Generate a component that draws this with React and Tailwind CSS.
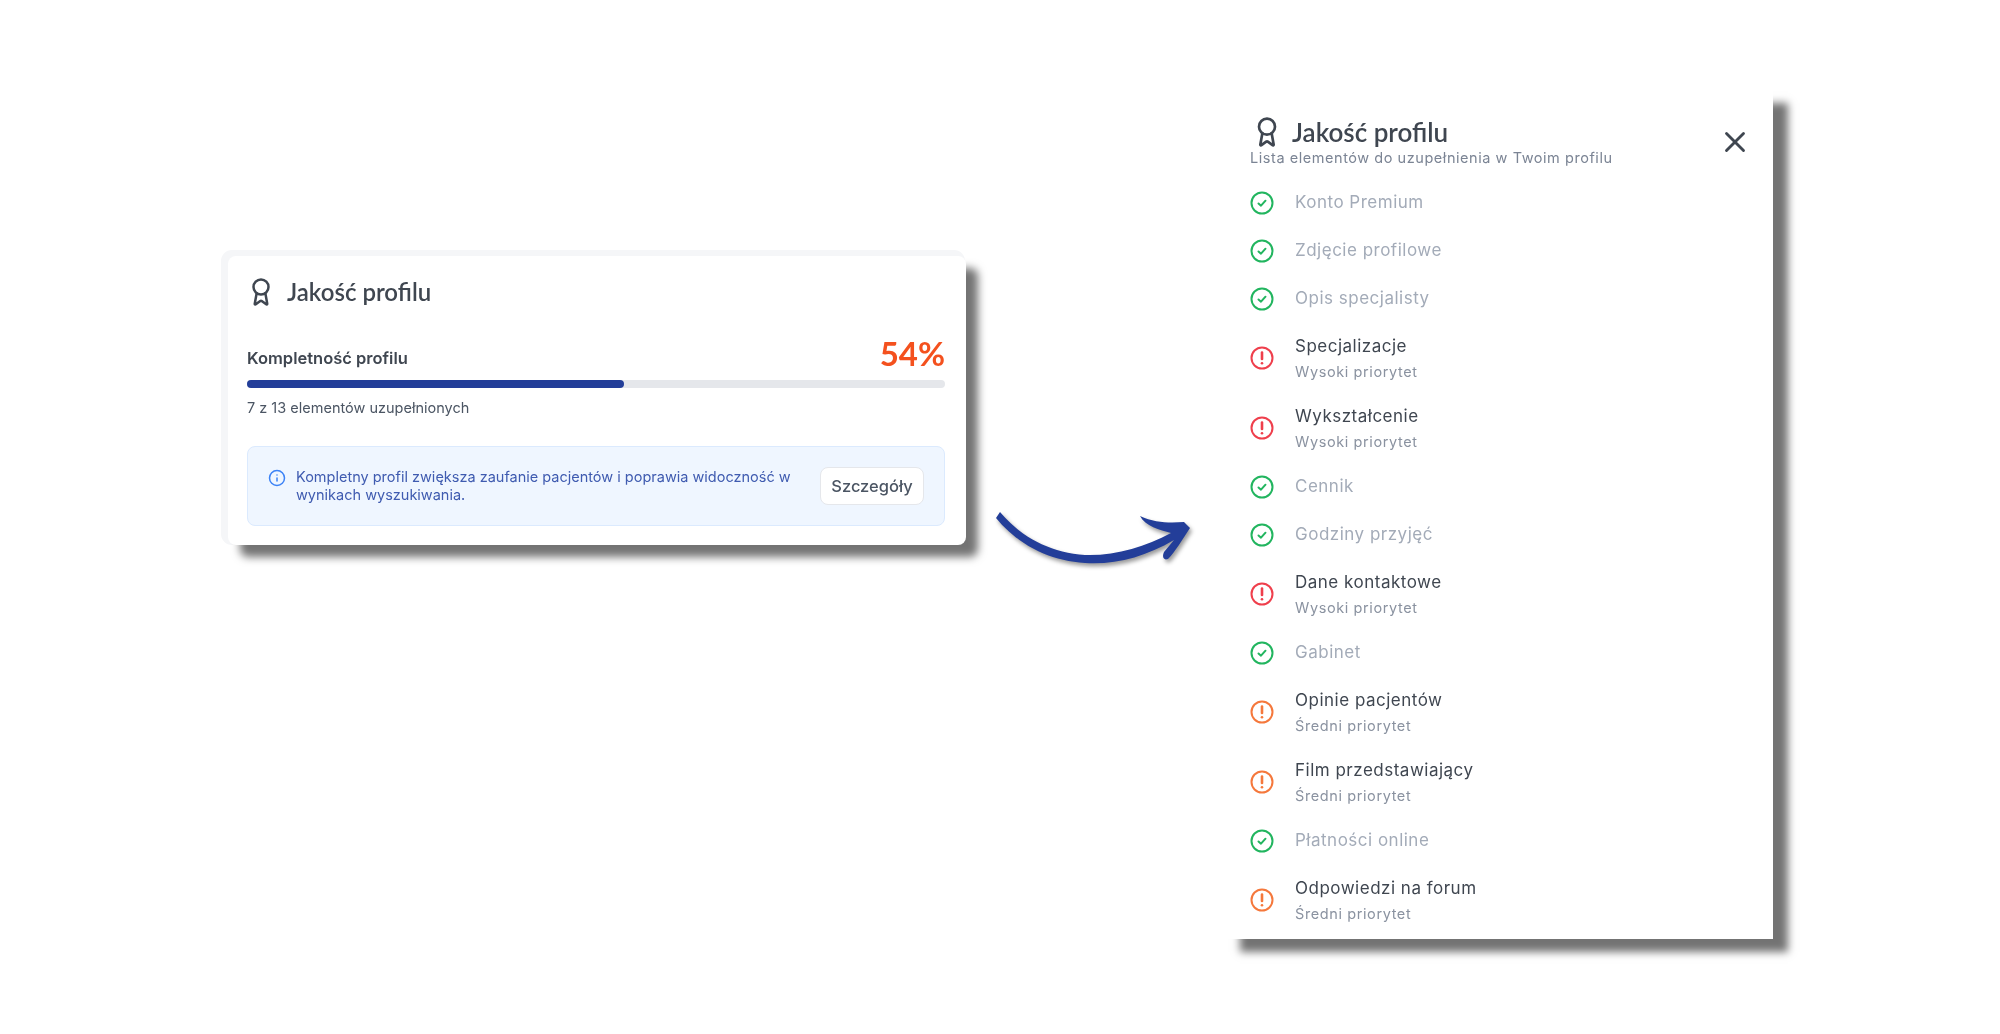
import React from "react";
import { Award, Info, X } from "lucide-react";

const items = [
  { name: "Konto Premium", done: true },
  { name: "Zdjęcie profilowe", done: true },
  { name: "Opis specjalisty", done: true },
  { name: "Specjalizacje", level: "high" },
  { name: "Wykształcenie", level: "high" },
  { name: "Cennik", done: true },
  { name: "Godziny przyjęć", done: true },
  { name: "Dane kontaktowe", level: "high" },
  { name: "Gabinet", done: true },
  { name: "Opinie pacjentów", level: "medium" },
  { name: "Film przedstawiający", level: "medium" },
  { name: "Płatności online", done: true },
  { name: "Odpowiedzi na forum", level: "medium" },
];

function CheckIcon() {
  return (
    <svg viewBox="0 0 24 24" className="w-6 h-6 shrink-0 text-[#22b55f]" fill="none" stroke="currentColor">
      <circle cx="12" cy="12" r="10.5" strokeWidth="2" />
      <path d="M8.5 12.5l2.5 2.2 4.5-5" strokeWidth="2" strokeLinecap="round" strokeLinejoin="round" />
    </svg>
  );
}

function AlertIcon({ level }) {
  const color = level === "high" ? "text-[#ef3f4c]" : "text-[#f5783c]";
  return (
    <svg viewBox="0 0 24 24" className={`w-6 h-6 shrink-0 ${color}`} fill="none" stroke="currentColor">
      <circle cx="12" cy="12" r="10.5" strokeWidth="2" />
      <path d="M12 6.5v6.5" strokeWidth="2.6" strokeLinecap="round" />
      <path d="M12 17.2v.1" strokeWidth="2.6" strokeLinecap="round" />
    </svg>
  );
}

function Arrow() {
  return (
    <svg viewBox="0 0 240 100" className="w-[240px] h-[100px] shrink-0 ml-1 mt-[490px] drop-shadow-[2px_3px_2px_rgba(0,0,0,0.4)]">
      <path
        fill="#233e99"
        d="M30 22 C50 46 80 63 115 65 C145 66 175 57 201 43 C190 40 175 36 170 26 C185 33 200 33 214 32 L220 38 C212 50 205 62 198 69 C193 71 192 66 194 62 L204 50 C175 67 145 75 115 73 C80 71 48 55 26 28 Z"
      />
    </svg>
  );
}

function ProfileCard() {
  return (
    <div className="w-[738px] h-[289px] shrink-0 mt-[256px] bg-white rounded-lg pl-[19px] pr-[21px] pt-[20px] blur-[0.5px] shadow-[12px_12px_8px_rgba(0,0,0,0.55),-4px_-3px_0_3px_#f5f6f8]">
      <div className="flex items-center gap-[11px] h-[32px]">
        <Award className="w-[30px] h-[30px] -ml-[1px] text-[#3f4650]" strokeWidth={2} />
        <h2 className="font-['Lato',sans-serif] font-semibold text-[24px] text-[#3f4650]">Jakość profilu</h2>
      </div>
      <div className="flex items-center justify-between mt-[29px] h-[34px]">
        <span className="mt-[8px] font-semibold text-[16.5px] text-[#3f4650]">Kompletność profilu</span>
        <span className="font-['Lato',sans-serif] font-bold text-[33px] text-[#f4511e]">54%</span>
      </div>
      <div className="h-2 mt-[9px] rounded-full bg-[#e5e7eb]">
        <div className="h-2 w-[54%] rounded-full bg-[#233e99]"></div>
      </div>
      <p className="mt-[11px] text-[14.5px] leading-[18px] text-[#4b5563]">7 z 13 elementów uzupełnionych</p>
      <div className="flex items-center justify-between mt-[29px] h-[80px] pl-[20px] pr-[20px] rounded-lg bg-[#eff6ff] border border-[#dbeafe]">
        <div className="flex items-start gap-[10px]">
          <Info className="w-[18px] h-[18px] mt-[1px] shrink-0 text-[#3b82f6]" strokeWidth={2} />
          <p className="w-[510px] text-[14.5px] leading-[18px] text-[#3f5bb0]">
            Kompletny profil zwiększa zaufanie pacjentów i poprawia widoczność w wynikach wyszukiwania.
          </p>
        </div>
        <button className="w-[104px] h-[38px] rounded-lg bg-white border border-[#e5e7eb] font-medium text-[16.5px] text-[#4b5563]">
          Szczegóły
        </button>
      </div>
    </div>
  );
}

function Row({ item }) {
  if (item.done) {
    return (
      <li className="flex items-center gap-[21px] h-[48px]">
        <CheckIcon />
        <span className="text-[17px] tracking-[0.5px] text-[#a3abb8]">{item.name}</span>
      </li>
    );
  }
  return (
    <li className="flex items-center gap-[21px] h-[70px]">
      <AlertIcon level={item.level} />
      <div className="flex flex-col mt-[3px]">
        <span className="text-[17px] leading-[24px] tracking-[0.5px] text-[#3f4650]">{item.name}</span>
        <span className="text-[14.5px] leading-[27px] tracking-[0.6px] text-[#8a92a0]">
          {item.level === "high" ? "Wysoki priorytet" : "Średni priorytet"}
        </span>
      </div>
    </li>
  );
}

function DetailsPanel() {
  return (
    <div className="w-[548px] h-[849px] shrink-0 mt-[90px] ml-[15px] bg-white pl-[25px] pr-[21px] blur-[0.5px] shadow-[15px_13px_8px_rgba(0,0,0,0.55)]">
      <div className="flex items-start justify-between h-[89px]">
        <div>
          <div className="flex items-center gap-[9px] mt-[27px] ml-[1px] h-[30px]">
            <Award className="w-[32px] h-[32px] text-[#3f4650]" strokeWidth={2} />
            <h2 className="font-['Lato',sans-serif] font-semibold text-[26px] text-[#3f4650]">Jakość profilu</h2>
          </div>
          <p className="mt-[2px] text-[14.5px] leading-[18px] tracking-[0.55px] text-[#7b8494]">
            Lista elementów do uzupełnienia w Twoim profilu
          </p>
        </div>
        <X className="w-[34px] h-[34px] mt-[35px] text-[#3f4650]" strokeWidth={2} />
      </div>
      <ul>
        {items.map((item) => (
          <Row key={item.name} item={item} />
        ))}
      </ul>
    </div>
  );
}

export default function App() {
  return (
    <div className="flex items-start w-full h-[1034px] pl-[228px] bg-white overflow-hidden font-['Inter',sans-serif]">
      <ProfileCard />
      <Arrow />
      <DetailsPanel />
    </div>
  );
}
